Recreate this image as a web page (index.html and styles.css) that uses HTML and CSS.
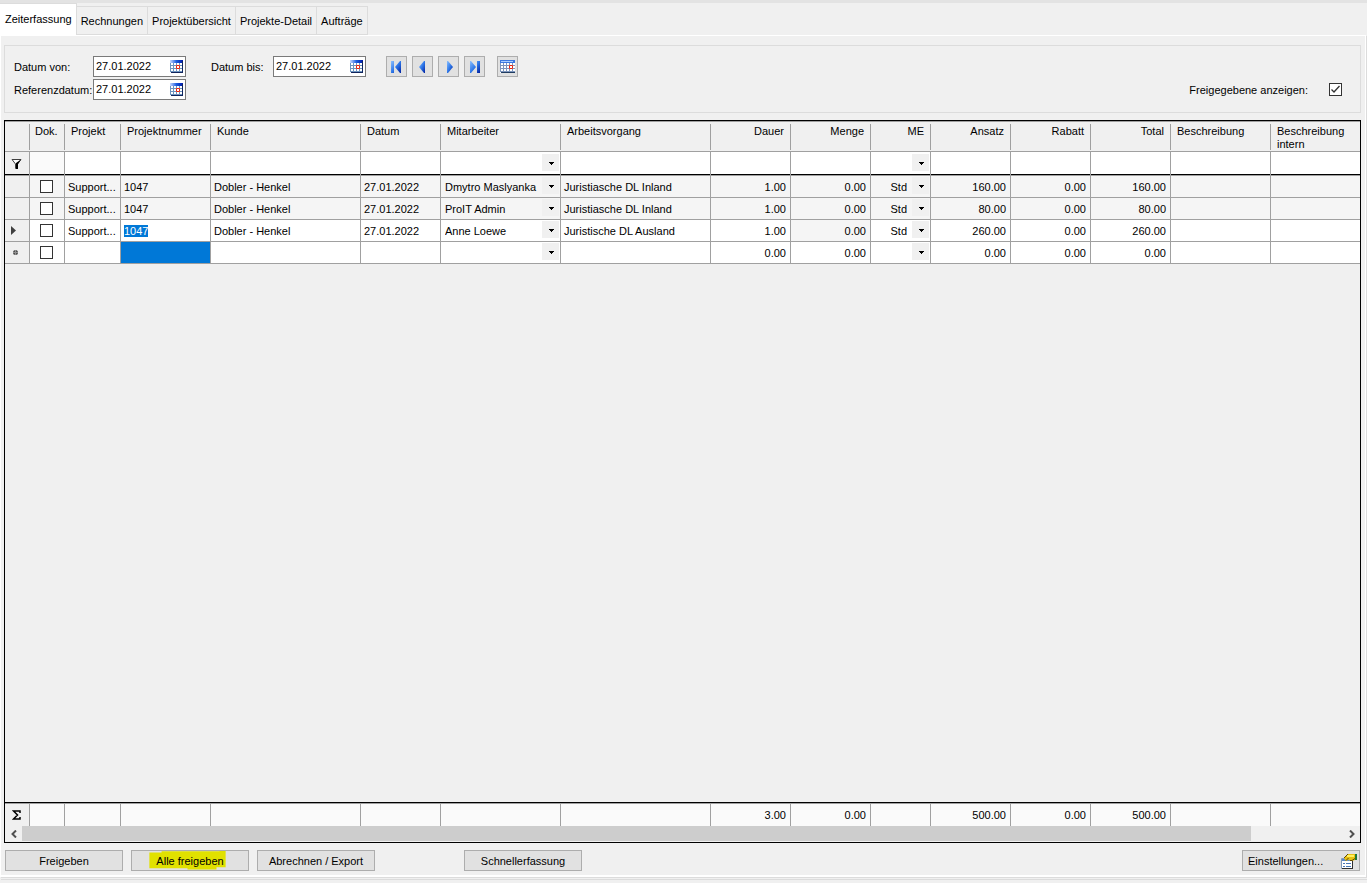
FILE: index.html
```html
<!DOCTYPE html>
<html lang="de">
<head>
    <meta charset="UTF-8">
    <meta name="viewport" content="width=device-width, initial-scale=1.0">
    <title>Zeiterfassung</title>
    <link rel="stylesheet" href="styles.css">
</head>
<body>
    <svg class="sprite" aria-hidden="true">
        <defs>
            <linearGradient id="blue" x1="0" y1="0" x2="1" y2="1">
                <stop offset="0" stop-color="#8cc0ff"/>
                <stop offset="0.5" stop-color="#2f78e8"/>
                <stop offset="1" stop-color="#0020a0"/>
            </linearGradient>
            <linearGradient id="bar" x1="0" y1="0" x2="1" y2="0">
                <stop offset="0" stop-color="#c8d8ff"/>
                <stop offset="0.5" stop-color="#1a5ce0"/>
                <stop offset="1" stop-color="#0018a8"/>
            </linearGradient>
        </defs>
        <symbol id="calendar" viewBox="0 0 13 13">
            <path fill="#fff" d="M0 0h13v13H0z"/>
            <path fill="url(#bar)" d="M0 0h13v3H0z"/>
            <path fill="#6c94c0" d="M0 3h1v9H0zM3 3h1v9H3zM6 3h1v9H6zM9 3h1v9H9zM0 5h12v1H0zM0 8h12v1H0zM0 11h12v1H0z"/>
            <path fill="#10245c" d="M12 1h1v12h-1zM1 12h12v1H1z"/>
            <path fill="#fff" stroke="#e82810" d="M6.500 5.500h3v3h-3z"/>
        </symbol>
        <symbol id="calendar-wide" viewBox="0 0 15 13">
            <path fill="#fff" d="M0 0h15v13H0z"/>
            <path fill="#3c78e0" d="M0 0h15v3H0z"/>
            <path fill="#a8ccff" d="M1 1h12v1H1z"/>
            <path fill="#7c94bc" d="M0 3h1v9H0zM3 3h1v9H3zM6 3h1v9H6zM9 3h1v9H9zM12 3h1v9h-1zM0 5h15v1H0zM0 8h15v1H0zM0 11h15v1H0z"/>
            <path fill="#203c60" d="M1 12h14v1H1z"/>
            <path fill="#fff" stroke="#e82810" d="M9.500 5.500h3v3h-3z"/>
        </symbol>
    </svg>

    <nav class="tabs">
        <a href="#zeiterfassung" class="tab active">Zeiterfassung</a>
        <a href="#rechnungen" class="tab">Rechnungen</a>
        <a href="#projektuebersicht" class="tab">Projektübersicht</a>
        <a href="#projekte-detail" class="tab">Projekte-Detail</a>
        <a href="#auftraege" class="tab">Aufträge</a>
    </nav>

    <main class="panel">
        <section class="criteria">
            <div class="fields">
                <label for="von">Datum von:</label>
                <div class="date">
                    <input id="von" type="text" value="27.01.2022">
                    <button type="button" aria-label="Kalender"><svg width="13" height="13"><use href="#calendar"/></svg></button>
                </div>
                <label for="bis" class="label-bis">Datum bis:</label>
                <div class="date">
                    <input id="bis" type="text" value="27.01.2022">
                    <button type="button" aria-label="Kalender"><svg width="13" height="13"><use href="#calendar"/></svg></button>
                </div>
                <div class="pager">
                    <button type="button" aria-label="Erster"><svg width="11" height="12" viewBox="0 0 11 12"><path fill="url(#blue)" d="M0 0h3v12H0zM10 0v12h-1L4 6l5-6z"/></svg></button>
                    <button type="button" aria-label="Zurück"><svg width="11" height="12" viewBox="0 0 11 12"><path fill="url(#blue)" d="M8 0v12H7L2 6l5-6z"/></svg></button>
                    <button type="button" aria-label="Weiter"><svg width="11" height="12" viewBox="0 0 11 12"><path fill="url(#blue)" d="M4 0v12h1l5-6-5-6z"/></svg></button>
                    <button type="button" aria-label="Letzter"><svg width="11" height="12" viewBox="0 0 11 12"><path fill="url(#blue)" d="M8 0h3v12H8zM1 0v12h1l5-6-5-6z"/></svg></button>
                    <button type="button" class="today" aria-label="Heute"><svg width="15" height="13"><use href="#calendar-wide"/></svg></button>
                </div>
                <label for="ref">Referenzdatum:</label>
                <div class="date">
                    <input id="ref" type="text" value="27.01.2022">
                    <button type="button" aria-label="Kalender"><svg width="13" height="13"><use href="#calendar"/></svg></button>
                </div>
            </div>
            <div class="released">
                <label for="released">Freigegebene anzeigen:</label>
                <input id="released" type="checkbox" checked>
            </div>
        </section>

        <section class="grid">
            <table class="rows">
                <colgroup>
                    <col class="c-mark"><col class="c-dok"><col class="c-projekt"><col class="c-nummer"><col class="c-xl"><col class="c-m"><col class="c-l"><col class="c-xl">
                    <col class="c-m"><col class="c-m"><col class="c-me"><col class="c-m"><col class="c-m"><col class="c-m"><col class="c-text"><col>
                </colgroup>
                <thead>
                    <tr class="titles">
                        <th></th>
                        <th class="dok">Dok.</th>
                        <th>Projekt</th>
                        <th>Projektnummer</th>
                        <th>Kunde</th>
                        <th>Datum</th>
                        <th>Mitarbeiter</th>
                        <th>Arbeitsvorgang</th>
                        <th class="num">Dauer</th>
                        <th class="num">Menge</th>
                        <th class="num">ME</th>
                        <th class="num">Ansatz</th>
                        <th class="num">Rabatt</th>
                        <th class="num">Total</th>
                        <th>Beschreibung</th>
                        <th>Beschreibung<br>intern</th>
                    </tr>
                    <tr class="filter">
                        <td class="mark"><svg width="11" height="10" viewBox="0 0 11 10"><path fill="#fff" stroke="#404040" d="M1 .5h9L6.500 5v4.500h-2V5z"/><path fill="#000" d="M5 4l5-3.500L7 5v5H5z"/></svg></td>
                        <td class="off"></td>
                        <td><input type="text" aria-label="Filter Projekt"></td>
                        <td><input type="text" aria-label="Filter Projektnummer"></td>
                        <td><input type="text" aria-label="Filter Kunde"></td>
                        <td><input type="text" aria-label="Filter Datum"></td>
                        <td><select aria-label="Filter Mitarbeiter"><option></option></select></td>
                        <td><input type="text" aria-label="Filter Arbeitsvorgang"></td>
                        <td><input type="text" aria-label="Filter Dauer"></td>
                        <td><input type="text" aria-label="Filter Menge"></td>
                        <td><select aria-label="Filter ME"><option></option></select></td>
                        <td><input type="text" aria-label="Filter Ansatz"></td>
                        <td><input type="text" aria-label="Filter Rabatt"></td>
                        <td><input type="text" aria-label="Filter Total"></td>
                        <td><input type="text" aria-label="Filter Beschreibung"></td>
                        <td><input type="text" aria-label="Filter Beschreibung intern"></td>
                    </tr>
                </thead>
                <tbody>
                    <tr class="locked">
                        <td class="mark"></td>
                        <td class="check"><input type="checkbox" aria-label="Dok."></td>
                        <td>Support...</td>
                        <td>1047</td>
                        <td>Dobler - Henkel</td>
                        <td>27.01.2022</td>
                        <td><select aria-label="Mitarbeiter"><option>Dmytro Maslyanka</option></select></td>
                        <td>Juristiasche DL Inland</td>
                        <td class="num">1.00</td>
                        <td class="num">0.00</td>
                        <td><select class="unit" aria-label="ME"><option>Std</option></select></td>
                        <td class="num">160.00</td>
                        <td class="num">0.00</td>
                        <td class="num">160.00</td>
                        <td></td>
                        <td></td>
                    </tr>
                    <tr class="locked">
                        <td class="mark"></td>
                        <td class="check"><input type="checkbox" aria-label="Dok."></td>
                        <td>Support...</td>
                        <td>1047</td>
                        <td>Dobler - Henkel</td>
                        <td>27.01.2022</td>
                        <td><select aria-label="Mitarbeiter"><option>ProIT Admin</option></select></td>
                        <td>Juristiasche DL Inland</td>
                        <td class="num">1.00</td>
                        <td class="num">0.00</td>
                        <td><select class="unit" aria-label="ME"><option>Std</option></select></td>
                        <td class="num">80.00</td>
                        <td class="num">0.00</td>
                        <td class="num">80.00</td>
                        <td></td>
                        <td></td>
                    </tr>
                    <tr>
                        <td class="mark current"><svg width="5" height="9" viewBox="0 0 5 9"><path fill="#404040" d="M0 0l5 4.500L0 9z"/></svg></td>
                        <td class="check"><input type="checkbox" aria-label="Dok."></td>
                        <td>Support...</td>
                        <td><span class="selected">1047</span></td>
                        <td>Dobler - Henkel</td>
                        <td>27.01.2022</td>
                        <td><select aria-label="Mitarbeiter"><option>Anne Loewe</option></select></td>
                        <td>Juristische DL Ausland</td>
                        <td class="num">1.00</td>
                        <td class="num readonly">0.00</td>
                        <td><select class="unit" aria-label="ME"><option>Std</option></select></td>
                        <td class="num">260.00</td>
                        <td class="num">0.00</td>
                        <td class="num">260.00</td>
                        <td></td>
                        <td></td>
                    </tr>
                    <tr>
                        <td class="mark"><svg width="7" height="7" viewBox="0 0 7 7"><circle cx="3.500" cy="3.500" r="2.500" fill="#505050"/><path stroke="#909090" d="M3.500 1v5M1 3.500h5"/></svg></td>
                        <td class="check"><input type="checkbox" aria-label="Dok."></td>
                        <td></td>
                        <td class="cursor"></td>
                        <td></td>
                        <td></td>
                        <td><select aria-label="Mitarbeiter"><option></option></select></td>
                        <td></td>
                        <td class="num">0.00</td>
                        <td class="num">0.00</td>
                        <td><select class="unit" aria-label="ME"><option></option></select></td>
                        <td class="num">0.00</td>
                        <td class="num">0.00</td>
                        <td class="num">0.00</td>
                        <td></td>
                        <td></td>
                    </tr>
                </tbody>
            </table>

            <table class="sums">
                <colgroup>
                    <col class="c-mark"><col class="c-dok"><col class="c-projekt"><col class="c-nummer"><col class="c-xl"><col class="c-m"><col class="c-l"><col class="c-xl">
                    <col class="c-m"><col class="c-m"><col class="c-me"><col class="c-m"><col class="c-m"><col class="c-m"><col class="c-text"><col>
                </colgroup>
                <tbody>
                    <tr>
                        <td class="mark"><svg width="9" height="10" viewBox="0 0 9 10"><path fill="none" stroke="#000" stroke-width="1.500" d="M8 3V1H1.500l4 4-4 4H8V7"/></svg></td>
                        <td></td><td></td><td></td><td></td><td></td><td></td><td></td>
                        <td class="num">3.00</td>
                        <td class="num">0.00</td>
                        <td></td>
                        <td class="num">500.00</td>
                        <td class="num">0.00</td>
                        <td class="num">500.00</td>
                        <td></td>
                        <td></td>
                    </tr>
                </tbody>
            </table>

            <div class="scrollbar">
                <button type="button" aria-label="Nach links"><svg width="6" height="8" viewBox="0 0 6 8"><path fill="none" stroke="#505050" stroke-width="2" d="M5 .5L1.500 4 5 7.500"/></svg></button>
                <div class="track"><div class="thumb"></div></div>
                <button type="button" aria-label="Nach rechts"><svg width="6" height="8" viewBox="0 0 6 8"><path fill="none" stroke="#505050" stroke-width="2" d="M1 .5L4.500 4 1 7.500"/></svg></button>
            </div>
        </section>

        <footer class="actions">
            <button type="button">Freigeben</button>
            <button type="button" class="marked"><span>Alle freigeben</span></button>
            <button type="button">Abrechnen / Export</button>
            <button type="button" class="quick">Schnellerfassung</button>
            <button type="button" class="settings">Einstellungen...
                <svg width="16" height="15" viewBox="0 0 16 15">
                    <path fill="#fff" stroke="#8098b8" d="M.5 4.500h11v10H.5z"/>
                    <path fill="#5c88c8" d="M1 5h10v2H1z"/>
                    <path fill="#4878b8" d="M2 9h2v1H2zM5 9h5v1H5zM2 12h2v1H2zM5 12h5v1H5z"/>
                    <path fill="#303030" d="M11 7h1v8h-1zM1 14h11v1H1z"/>
                    <path fill="#e8c010" d="M3 4l4-4h7v6l-3 1H9L8 5.500 5 7z"/>
                    <path fill="#fff060" d="M6 1h7v2H6z"/>
                    <path fill="none" stroke="#604800" d="M5 6.500L7.500 4M9 6.500h2l3-2M3 4l4-4"/>
                    <path fill="#207838" d="M14 0h2v6h-2z"/>
                </svg>
            </button>
        </footer>
    </main>
</body>
</html>
```

FILE: styles.css
```css
* {
    margin: 0;
    padding: 0;
    box-sizing: border-box;
}

body {
    font-family: "Liberation Sans", Arial, sans-serif;
    font-size: 11px;
    line-height: 13px;
    color: #000;
    background: #f0f0f0;
    border-top: 3px solid #e3e3e3;
    display: flex;
    flex-direction: column;
    height: 100vh;
    padding-bottom: 6px;
    overflow: hidden;
}

input,
select,
button {
    font: inherit;
    color: inherit;
    border: none;
    border-radius: 0;
    outline: none;
}

svg {
    display: block;
    flex: none;
}

.sprite {
    position: absolute;
    width: 0;
    height: 0;
}

/* tabs */
.tabs {
    display: flex;
    align-items: flex-end;
    height: 32px;
}

.tab {
    height: 29px;
    padding: 8px 4px 0;
    color: #000;
    text-decoration: none;
    white-space: nowrap;
    border: 1px solid #dcdcdc;
    border-left: none;
}

.tab.active {
    height: 32px;
    padding: 9px 4px 0 5px;
    background: #fff;
    border-bottom: none;
}

.panel {
    flex: 1;
    min-height: 0;
    display: flex;
    flex-direction: column;
    margin-right: 1px;
    padding: 9px 4px 4px 3px;
    border: 1px solid #fff;
    border-bottom-width: 2px;
    box-shadow: 1px 1px #dcdcdc, 1px 2px #f0f0f0, 1px 3px #dcdcdc;
}

/* search criteria */
.criteria {
    display: flex;
    justify-content: space-between;
    border: 1px solid #dcdcdc;
    padding: 10px 18px 12px 9px;
    margin-bottom: 7px;
}

.fields {
    display: grid;
    grid-template-columns: 79px 93px 87px 93px auto;
    row-gap: 2px;
    align-items: center;
}

.criteria label {
    padding-top: 2px;
}

.criteria .label-bis {
    padding-left: 25px;
}

.date {
    display: flex;
    align-items: center;
    height: 21px;
    padding: 0 2px;
    background: #fff;
    border: 1px solid #7a7a7a;
}

.date input {
    flex: 1;
    min-width: 0;
    background: none;
}

.date button {
    background: none;
}

.pager {
    display: flex;
    gap: 5px;
    padding-left: 20px;
}

.pager button {
    display: flex;
    align-items: center;
    justify-content: center;
    width: 21px;
    height: 21px;
    background: #e1e1e1;
    border: 1px solid #adadad;
}

.pager .today {
    margin-left: 7px;
}

.released {
    display: flex;
    align-items: center;
    align-self: flex-end;
    gap: 21px;
    height: 21px;
}

input[type="checkbox"] {
    appearance: none;
    display: block;
    width: 13px;
    height: 13px;
    background: #fff;
    border: 1px solid #333;
}

input[type="checkbox"]:checked {
    background: #fff url("data:image/svg+xml,%3Csvg xmlns='http://www.w3.org/2000/svg' viewBox='0 0 11 11'%3E%3Cpath fill='none' stroke='%23333' stroke-width='1.3' d='M1.500 5.500L4 8l5.500-6'/%3E%3C/svg%3E");
}

/* data grid */
.grid {
    flex: 1;
    min-height: 0;
    display: flex;
    flex-direction: column;
    border: 1px solid #000;
    margin-bottom: 7px;
}

table {
    width: 100%;
    table-layout: fixed;
    border-collapse: separate;
    border-spacing: 0;
    border-top: 1px solid #a0a0a0;
}

.c-mark { width: 25px; }
.c-dok { width: 35px; }
.c-projekt { width: 56px; }
.c-nummer { width: 90px; }
.c-me { width: 60px; }
.c-m { width: 80px; }
.c-text { width: 100px; }
.c-l { width: 120px; }
.c-xl { width: 150px; }

th {
    height: 30px;
    padding: 3px 6px 0;
    font-weight: normal;
    text-align: left;
    vertical-align: top;
    white-space: nowrap;
    border-bottom: 1px solid #a0a0a0;
    background: linear-gradient(#a0a0a0, #a0a0a0) right 2px / 1px 26px no-repeat;
}

th:last-child {
    background: none;
}

th.dok {
    padding: 3px 0 0 5px;
}

td {
    height: 22px;
    padding: 1px 3px 0;
    background: #fff;
    white-space: nowrap;
    border-right: 1px solid #a0a0a0;
    border-bottom: 1px solid #a0a0a0;
}

td:last-child {
    border-right: none;
}

.num {
    text-align: right;
}

th.num {
    padding-right: 7px;
}

td.num {
    padding-right: 4px;
}

td.mark {
    padding: 0 0 0 7px;
    background: #f0f0f0;
}

td.current {
    padding-left: 6px;
}

td.check {
    padding: 0 0 0 10px;
}

td.readonly,
.locked td {
    background: #f5f5f5;
}

.locked td.mark {
    background: #f0f0f0;
}

.filter td {
    height: 24px;
    padding: 0;
    box-shadow: inset 0 -1px #000;
}

.filter td.mark {
    padding-left: 6px;
}

.filter td.off {
    background: #fafafa;
}

td input[type="text"] {
    display: block;
    width: 100%;
    height: 20px;
    padding: 0 3px;
    background: none;
}

td:has(select),
.filter td:has(select) {
    padding: 0 1px 2px 0;
}

td select {
    appearance: none;
    display: block;
    width: 100%;
    height: 17px;
    padding: 4px 17px 0 4px;
    background:
        url("data:image/svg+xml,%3Csvg xmlns='http://www.w3.org/2000/svg' width='5' height='3'%3E%3Cpath d='M0 0h5v1H4v1H3v1H2V2H1V1H0z'/%3E%3C/svg%3E") right 5px top 8px no-repeat,
        linear-gradient(#f0f0f0, #f0f0f0) right / 17px 100% no-repeat;
}

td select.unit {
    text-align: right;
    text-align-last: right;
    padding-right: 22px;
}

.selected {
    color: #fff;
    background: #0078d7;
}

td.cursor {
    background: #0078d7;
}

.sums {
    margin-top: auto;
    box-shadow: 0 -1px #000;
}

.sums td {
    border-bottom: none;
    background: #fafafa;
}

.sums td.mark {
    padding-left: 7px;
    background: #f0f0f0;
}

.scrollbar {
    display: flex;
    height: 16px;
}

.scrollbar button {
    display: flex;
    align-items: center;
    justify-content: center;
    width: 17px;
    background: none;
}

.track {
    flex: 1;
}

.thumb {
    width: 93%;
    height: 15px;
    background: #cdcdcd;
}

/* bottom buttons */
.actions {
    display: flex;
    gap: 8px;
    padding: 0 1px;
}

.actions button {
    width: 118px;
    height: 21px;
    padding-top: 1px;
    background: #e1e1e1;
    border: 1px solid #adadad;
}

.marked span {
    position: relative;
    isolation: isolate;
}

/* highlighter stroke behind the caption */
.marked span::before {
    content: "";
    position: absolute;
    z-index: -1;
    inset: -4px -2px -3px -7px;
    background: #e1e100;
    clip-path: polygon(0 10%, 16% 10%, 16% 4%, 92% 4%, 92% 0, 100% 0, 100% 88%, 88% 88%, 88% 100%, 50% 100%, 50% 94%, 0 94%);
}

.actions .quick {
    margin-left: 81px;
}

.actions .settings {
    display: flex;
    align-items: center;
    justify-content: space-between;
    margin-left: auto;
    padding: 1px 2px 0 5px;
}
```
